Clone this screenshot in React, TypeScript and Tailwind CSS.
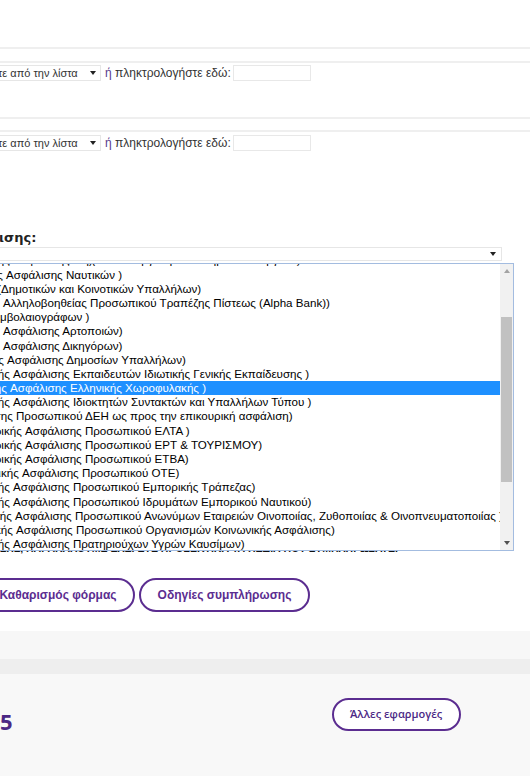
import React from 'react';

type Opt = { pre: string; rest: string; anchor: string; selected?: boolean };

const options: Opt[] = [
  { pre: 'Επικουρικής ', rest: 'Ασφάλισης Μηχανικών Εργοληπτών Δημοσίων Έργων )', anchor: 'w-[13px]' },
  { pre: 'Επικουρικής ', rest: 'Ασφάλισης Ναυτικών )', anchor: 'w-[6px]' },
  { pre: '(', rest: 'Δημοτικών και Κοινοτικών Υπαλλήλων)', anchor: 'w-[1px]' },
  { pre: 'Ταμείο ', rest: 'Αλληλοβοηθείας Προσωπικού Τραπέζης Πίστεως (Alpha Bank))', anchor: 'w-[3px]' },
  { pre: 'Συ', rest: 'μβολαιογράφων )', anchor: 'w-[0px]' },
  { pre: 'Επικουρικής ', rest: 'Ασφάλισης Αρτοποιών)', anchor: 'w-[3px]' },
  { pre: 'Επικουρικής ', rest: 'Ασφάλισης Δικηγόρων)', anchor: 'w-[3px]' },
  { pre: 'Επικουρικής ', rest: 'Ασφάλισης Δημοσίων Υπαλλήλων)', anchor: 'w-[7px]' },
  { pre: 'Επικουρικής ', rest: 'Ασφάλισης Εκπαιδευτών Ιδιωτικής Γενικής Εκπαίδευσης )', anchor: 'w-[13px]' },
  { pre: 'Επικουρικής ', rest: 'Ασφάλισης Ελληνικής Χωροφυλακής )', anchor: 'w-[10px]', selected: true },
  { pre: 'Επικουρικής ', rest: 'Ασφάλισης Ιδιοκτητών Συντακτών και Υπαλλήλων Τύπου )', anchor: 'w-[13px]' },
  { pre: 'Ασφάλισης ', rest: 'Προσωπικού ΔΕΗ ως προς την επικουρική ασφάλιση)', anchor: 'w-[16px]' },
  { pre: 'Επικουρικής ', rest: 'Ασφάλισης Προσωπικού ΕΛΤΑ )', anchor: 'w-[25px]' },
  { pre: 'Επικουρικής ', rest: 'Ασφάλισης Προσωπικού ΕΡΤ & ΤΟΥΡΙΣΜΟΥ)', anchor: 'w-[25px]' },
  { pre: 'Επικουρικής ', rest: 'Ασφάλισης Προσωπικού ΕΤΒΑ)', anchor: 'w-[25px]' },
  { pre: 'Επικουρικής ', rest: 'Ασφάλισης Προσωπικού ΟΤΕ)', anchor: 'w-[22px]' },
  { pre: 'Επικουρικής ', rest: 'Ασφάλισης Προσωπικού Εμπορικής Τράπεζας)', anchor: 'w-[13px]' },
  { pre: 'Επικουρικής ', rest: 'Ασφάλισης Προσωπικού Ιδρυμάτων Εμπορικού Ναυτικού)', anchor: 'w-[13px]' },
  { pre: 'Επικουρικής ', rest: 'Ασφάλισης Προσωπικού Ανωνύμων Εταιρειών Οινοποιίας, Ζυθοποιίας & Οινοπνευματοποιίας )', anchor: 'w-[15px]' },
  { pre: 'Επικουρικής ', rest: 'Ασφάλισης Προσωπικού Οργανισμών Κοινωνικής Ασφάλισης)', anchor: 'w-[16px]' },
  { pre: 'Επικουρικής ', rest: 'Ασφάλισης Πρατηριούχων Υγρών Καυσίμων)', anchor: 'w-[13px]' },
];

function Caret({ up = false, color = '#222' }: { up?: boolean; color?: string }) {
  return (
    <svg width="6" height="4" viewBox="0 0 6 4" className="shrink-0">
      <path d={up ? 'M0 4 L3 0 L6 4 Z' : 'M0 0 L6 0 L3 4 Z'} fill={color} />
    </svg>
  );
}

function ChooseRow({ className = '' }: { className?: string }) {
  return (
    <div className={`flex items-center h-[16px] ${className}`}>
      <div className="w-[101px] h-[16px] border border-l-0 border-[#e6e6e6] flex items-center justify-between pr-[4px] overflow-hidden text-[11px]">
        <span className="-ml-[2px] whitespace-nowrap">τε από την λίστα</span>
        <Caret />
      </div>
      <span className="ml-[4px] whitespace-nowrap">
        <span className="text-[#5b3a8c]">ή</span> πληκτρολογήστε εδώ:
      </span>
      <div className="ml-[2px] w-[78px] h-[16px] border border-[#e8e8e8]" />
    </div>
  );
}

function OptionRow({ opt }: { opt: Opt }) {
  return (
    <div
      className={`flex h-[14.2px] items-center whitespace-nowrap ${
        opt.selected ? 'bg-[#1e90ff] text-white' : 'text-black'
      }`}
    >
      <div className={`${opt.anchor} shrink-0 flex justify-end`}>
        <span className="shrink-0 whitespace-pre">{opt.pre}</span>
      </div>
      <span>{opt.rest}</span>
    </div>
  );
}

export default function App() {
  return (
    <div className="w-[530px] h-[776px] overflow-hidden bg-white font-['Liberation_Sans',Arial,sans-serif] text-[12px] text-[#333]">
      <div className="h-[47px]" />
      <div className="h-[2px] bg-[#efefef]" />
      <div className="h-[12px]" />
      <div className="h-[2px] bg-[#efefef]" />
      <ChooseRow className="mt-[2px]" />
      <div className="h-[2px] bg-[#efefef] mt-[36px]" />
      <div className="h-[2px] bg-[#efefef] mt-[11px]" />
      <ChooseRow className="mt-[3px]" />

      <div className="mt-[80px] h-[14px] flex items-center font-['DejaVu_Sans',sans-serif] font-bold text-[13px] text-[#222]">
        <span className="-ml-[1px]">ισης:</span>
      </div>

      <div className="relative mt-[2px]">
        <div className="w-[502px] h-[14px] border border-l-0 border-[#e6e6e6] flex items-center justify-end pr-[5px]">
          <Caret />
        </div>

        {/* open dropdown list */}
        <div className="absolute left-0 top-[16px] w-[514px] h-[288px] border border-l-0 border-[#a3bce0] bg-white flex z-10 text-[11.6px]">
          <div className="flex-1 overflow-hidden">
            <div className="-mt-[11px]">
              {options.map((o, i) => (
                <OptionRow key={i} opt={o} />
              ))}
            </div>
          </div>
          <div className="w-[13px] bg-[#f1f1f1] flex flex-col items-center">
            <div className="h-[14px] flex items-center justify-center">
              <Caret up color="#a3a3a3" />
            </div>
            <div className="mt-[39px] w-[11px] h-[165px] bg-[#c1c1c1]" />
            <div className="mt-auto h-[14px] flex items-center justify-center">
              <Caret color="#505050" />
            </div>
          </div>
        </div>

        <div className="mt-[281px] text-[10.5px] font-bold text-[#111] whitespace-nowrap leading-[13px]">
          ΣΗΣ, ΠΑΡΑΚΑΛΟΥΜΕ ΕΛΕΓΞΤΕ ΠΡΟΣΕΚΤΙΚΑ ΤΑ ΠΕΔΙΑ ΠΟΥ ΣΥΜΠΛΗΡΩΣΑΤΕ.
        </div>
      </div>

      <div className="flex gap-[4px] mt-[23px] -ml-[19px]">
        <button className="w-[154px] h-[34px] rounded-full border-2 border-[#5b2d90] text-[#5b2d90] font-bold text-[12px] bg-white">
          Καθαρισμός φόρμας
        </button>
        <button className="w-[171px] h-[34px] rounded-full border-2 border-[#5b2d90] text-[#5b2d90] font-bold text-[12px] bg-white">
          Οδηγίες συμπλήρωσης
        </button>
      </div>

      <div className="mt-[19px] h-[28px] bg-[#f7f7f7]" />
      <div className="h-[15px] bg-[#eeeeee]" />
      <div className="h-[120px] bg-[#f8f8f8] flex items-start pt-[24px]">
        <span className="mt-[12px] font-['Open_Sans',sans-serif] font-bold text-[22px] leading-[22px] text-[#4b2885]">5</span>
        <button className="ml-[319px] w-[129px] h-[33px] rounded-full border-2 border-[#5b2d90] bg-white text-[#4b2885] font-['Open_Sans',sans-serif] font-semibold text-[11px]">
          Άλλες εφαρμογές
        </button>
      </div>
    </div>
  );
}
